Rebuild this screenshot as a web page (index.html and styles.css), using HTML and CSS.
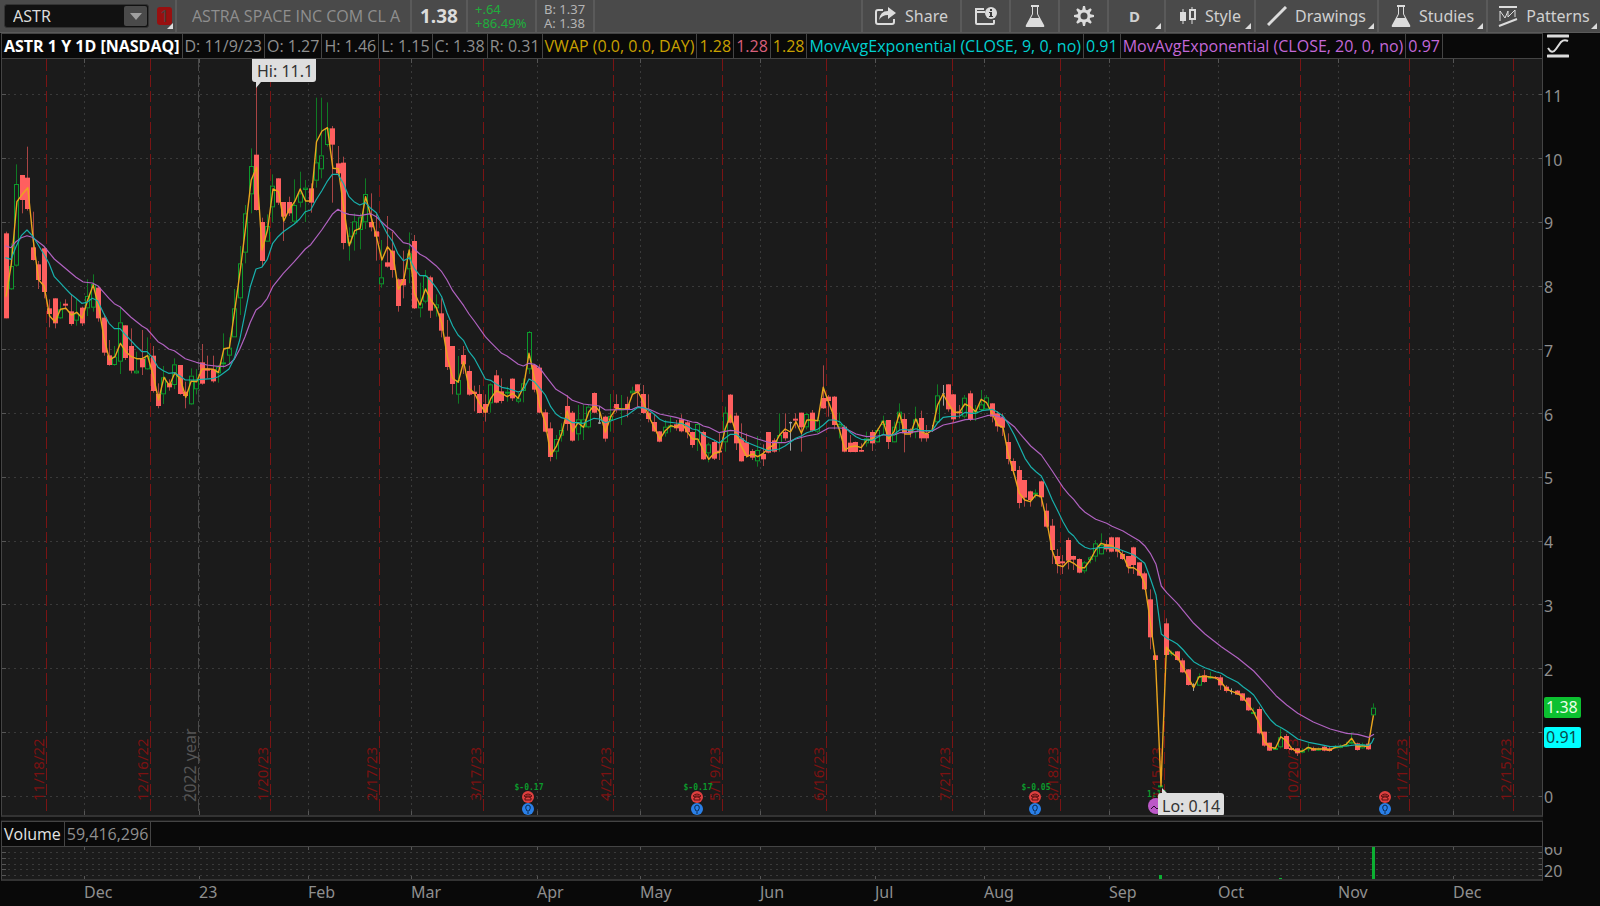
FILE: index.html
```html
<!DOCTYPE html>
<html lang="en">
<head>
    <meta charset="UTF-8">
    <meta name="viewport" content="width=device-width, initial-scale=1.0">
    <title>ASTR 1 Y 1D</title>
    <link rel="stylesheet" href="styles.css">
</head>
<body>
    <header class="toolbar">
        <div class="symbol-cell">
            <div class="symbol-box">
                <input class="symbol-input" type="text" value="ASTR" aria-label="Symbol">
                <button class="symbol-drop" aria-label="Symbol list">
                    <svg width="12" height="7" viewBox="0 0 12 7"><path d="M0 0H12L6 7Z" fill="#a0a0a0"/></svg>
                </button>
            </div>
            <button class="link-badge corner">1</button>
        </div>
        <div class="cell company">ASTRA SPACE INC COM CL A</div>
        <div class="cell last">1.38</div>
        <div class="cell stack change"><span>+.64</span><span>+86.49%</span></div>
        <div class="cell stack quote"><span>B: 1.37</span><span>A: 1.38</span></div>
        <div class="spacer"></div>
        <button class="cell tool share">
            <svg width="22" height="20" viewBox="0 0 22 20">
                <path d="M8 4H3Q1 4 1 6V16Q1 18 3 18H17Q19 18 19 16V13" fill="none" stroke="#dcdcdc" stroke-width="2"/>
                <path d="M13 1L21 7L13 13V9Q7 9 4 14Q5 5 13 5Z" fill="#dcdcdc"/>
            </svg>
            Share
        </button>
        <button class="cell tool icon-only" aria-label="Company info">
            <svg width="22" height="20" viewBox="0 0 22 20">
                <path d="M10 6H1V17Q1 18 2 18H18Q19 18 19 17V14M1 7V3H9" fill="none" stroke="#dcdcdc" stroke-width="2"/>
                <circle cx="16" cy="7" r="6" fill="#dcdcdc"/>
                <path d="M15 3H17V5H15ZM14 6H17V10H18V11H14V10H15V7H14Z" fill="#3a3a3a"/>
            </svg>
        </button>
        <button class="cell tool icon-only" aria-label="Lab">
            <svg width="20" height="24" viewBox="0 0 20 24">
                <path d="M6 1H14V3H13V10L19 21Q20 23 18 23H2Q0 23 1 21L7 10V3H6Z" fill="#dcdcdc"/>
                <path d="M8 3H12V10L14 14H6L8 10Z" fill="#4a4a4a"/>
            </svg>
        </button>
        <button class="cell tool icon-only" aria-label="Settings">
            <svg width="20" height="20" viewBox="-10 -10 20 20">
                <circle r="5" fill="none" stroke="#dcdcdc" stroke-width="3"/>
                <path d="M-2 -5L-1 -10H1L2 -5ZM-2 5L-1 10H1L2 5ZM-5 -2L-10 -1V1L-5 2ZM5 -2L10 -1V1L5 2Z" fill="#dcdcdc"/>
                <path d="M-2 -5L-1 -10H1L2 -5ZM-2 5L-1 10H1L2 5ZM-5 -2L-10 -1V1L-5 2ZM5 -2L10 -1V1L5 2Z" fill="#dcdcdc" transform="rotate(45)"/>
            </svg>
        </button>
        <button class="cell tool period corner">D</button>
        <button class="cell tool style corner">
            <svg width="18" height="20" viewBox="0 0 18 20">
                <path d="M4 3V18M13 1V4M13 14V18" stroke="#dcdcdc" stroke-width="1"/>
                <rect x="1" y="6" width="6" height="9" fill="#dcdcdc"/>
                <rect x="11" y="4" width="5" height="9" fill="none" stroke="#dcdcdc" stroke-width="2"/>
            </svg>
            Style
        </button>
        <button class="cell tool drawings corner">
            <svg width="20" height="20" viewBox="0 0 20 20"><path d="M1 19L19 1" stroke="#dcdcdc" stroke-width="3"/></svg>
            Drawings
        </button>
        <button class="cell tool studies corner">
            <svg width="20" height="24" viewBox="0 0 20 24">
                <path d="M6 1H14V3H13V10L19 21Q20 23 18 23H2Q0 23 1 21L7 10V3H6Z" fill="#dcdcdc"/>
                <path d="M8 3H12V10L14 14H6L8 10Z" fill="#4a4a4a"/>
            </svg>
            Studies
        </button>
        <button class="cell tool patterns corner">
            <svg width="20" height="22" viewBox="0 0 20 22">
                <path d="M1 2H19M1 21L19 14" stroke="#dcdcdc" stroke-width="2"/>
                <path d="M2 16V6L7 13L10 6V12L17 5V12" fill="none" stroke="#dcdcdc" stroke-width="1"/>
            </svg>
            Patterns
        </button>
    </header>

    <main class="chart">
        <div class="legend">
            <span class="title">ASTR 1 Y 1D [NASDAQ]</span>
            <span>D: 11/9/23</span>
            <span>O: 1.27</span>
            <span>H: 1.46</span>
            <span>L: 1.15</span>
            <span>C: 1.38</span>
            <span>R: 0.31</span>
            <span class="vwap">VWAP (0.0, 0.0, DAY)</span>
            <span class="vwap">1.28</span>
            <span class="upper">1.28</span>
            <span class="vwap">1.28</span>
            <span class="ema9">MovAvgExponential (CLOSE, 9, 0, no)</span>
            <span class="ema9">0.91</span>
            <span class="ema20">MovAvgExponential (CLOSE, 20, 0, no)</span>
            <span class="ema20">0.97</span>
        </div>
        <button class="axis-mode" aria-label="Axis settings">
            <svg width="22" height="24" viewBox="0 0 22 24">
                <path d="M1 2H21M1 22H21" stroke="#dcdcdc" stroke-width="3" stroke-linecap="round"/>
                <path d="M1 14Q5 21 9 15L14 8Q17 5 21 7" fill="none" stroke="#dcdcdc" stroke-width="2"/>
            </svg>
        </button>
        <div class="plot"><svg id="price"></svg></div>
        <div class="axis"><svg id="priceAxis"></svg></div>
        <div class="splitter"></div>
        <div class="axis"></div>
        <div class="legend">
            <span class="volume">Volume</span>
            <span>59,416,296</span>
        </div>
        <div class="axis"></div>
        <div class="plot"><svg id="volume"></svg></div>
        <div class="axis"><svg id="volumeAxis"></svg></div>
        <div class="months"><svg id="months"></svg></div>
    </main>
    <script src="script.js"></script>
</body>
</html>
```
FILE: styles.css
```css
* {
    box-sizing: border-box;
}
body {
    margin: 0;
    height: 100vh;
    display: flex;
    flex-direction: column;
    background: #090909;
    color: #8f8f8f;
    font-family: "Noto Sans", "Open Sans", sans-serif;
    font-size: 16px;
    line-height: 20px;
    overflow: hidden;
}
button, input {
    font: inherit;
    color: inherit;
    border: none;
    background: none;
    padding: 0;
    margin: 0;
}
svg {
    display: block;
    flex: none;
}

/* toolbar */
.toolbar {
    height: 33px;
    flex: none;
    display: flex;
    background: #4a4a4a;
    border-bottom: 1px solid #5a5a5a;
    overflow: hidden;
}
.symbol-cell {
    width: 175px;
    flex: none;
    display: flex;
    align-items: center;
    gap: 8px;
    padding-left: 4px;
}
.symbol-box {
    display: flex;
    width: 145px;
    height: 24px;
    padding: 1px;
    background: #111;
    border: 1px solid #333;
    border-radius: 3px;
}
.symbol-input {
    flex: 1;
    min-width: 0;
    padding-left: 7px;
    color: #dcdcdc;
}
.symbol-drop {
    width: 23px;
    display: flex;
    align-items: center;
    justify-content: center;
    background: #4a4a4a;
    border-radius: 2px;
}
.link-badge {
    width: 15px;
    height: 18px;
    line-height: 18px;
    border-radius: 3px;
    background: #981010;
    color: #4a4040;
}
.cell {
    flex: none;
    display: flex;
    align-items: center;
    border-left: 2px solid #5a5a5a;
}
.company {
    width: 235px;
    padding-left: 15px;
    font-family: "Open Sans", "Noto Sans", sans-serif;
    color: #8f8f8f;
}
.last {
    width: 56px;
    padding-left: 8px;
    font-size: 19px;
    font-weight: bold;
    color: #dcdcdc;
}
.stack {
    flex-direction: column;
    align-items: flex-start;
    justify-content: center;
    padding-left: 7px;
    font-size: 13px;
    line-height: 14px;
}
.change {
    width: 69px;
    color: #1fae3c;
}
.quote {
    width: 60px;
    color: #b4b4b4;
    border-right: 2px solid #5a5a5a;
}
.spacer {
    flex: 1;
}
.tool {
    justify-content: center;
    gap: 8px;
    color: #d0d0d0;
}
.share {
    width: 99px;
}
.icon-only {
    width: 49px;
}
.period {
    width: 57px;
    padding-right: 4px;
    font-size: 15px;
    font-weight: bold;
}
.style {
    width: 90px;
}
.drawings {
    width: 123px;
}
.studies {
    width: 109px;
}
.patterns {
    width: 114px;
}
.corner {
    position: relative;
}
.corner::after {
    content: "";
    position: absolute;
    right: 3px;
    bottom: 3px;
    border-left: 6px solid transparent;
    border-bottom: 6px solid #dcdcdc;
}
.link-badge::after {
    right: -1px;
    bottom: -4px;
}

/* chart area */
.chart {
    flex: 1;
    min-height: 0;
    display: grid;
    grid-template-columns: minmax(0, 1fr) 57px;
    grid-template-rows: 26px minmax(0, 1fr) 4px 26px 34px 25px;
    padding-left: 1px;
}
.legend {
    display: flex;
    overflow: hidden;
    white-space: nowrap;
    border: 1px solid #444;
    font-family: "Open Sans", "Noto Sans", sans-serif;
    line-height: 24px;
}
.legend span {
    padding: 0 2px;
    border-right: 1px solid #444;
}
.legend .vwap {
    color: #c8a000;
}
.legend .upper {
    color: #d8607c;
}
.legend .ema9 {
    color: #00d0d0;
}
.legend .ema20 {
    color: #c368d8;
}
.legend .title {
    color: #fff;
    font-weight: bold;
}
.legend .volume {
    padding-right: 3px;
    color: #e4e4e4;
}
.axis-mode {
    padding-left: 4px;
}
.plot {
    min-width: 0;
    background: #1b1b1b;
    border-left: 1px solid #444;
    border-right: 1px solid #444;
    border-bottom: 2px solid #333;
}
.splitter {
    background: #111;
    border-bottom: 1px solid #222;
}
.months {
    grid-column: 1 / 3;
}
.plot svg, .axis svg, .months svg {
    width: 100%;
    height: 100%;
}

/* drawing */
.grid {
    stroke: #3a3a3a;
    stroke-width: 1;
    stroke-dasharray: 2 4;
}
.tick {
    stroke: #555;
    stroke-width: 1;
}
.expiry {
    stroke: #7a1414;
    stroke-width: 1;
    stroke-dasharray: 12 4 12 4 11 4 12 4;
}
.expiry-label {
    fill: #7a1212;
    font-size: 15px;
}
.year {
    stroke: #4a4a4a;
    stroke-dasharray: 12 4 12 4 11 4 12 4;
}
.year-label {
    fill: #555;
}
.wick-r {
    stroke: #a84444;
}
.wick-g {
    stroke: #0f7a24;
}
.wick-w {
    stroke: #a0a0a0;
}
.body-r {
    fill: #ff5f5f;
}
.body-g {
    fill: none;
    stroke: #0c9a2c;
}
.body-w {
    fill: #a0a0a0;
}
.line {
    fill: none;
    stroke-width: 1;
    stroke-linejoin: round;
}
.line-vwap {
    stroke: #eaa51e;
    stroke-width: 1.4;
}
.line-ema9 {
    stroke: #18b0ac;
    stroke-width: 1.2;
}
.line-ema20 {
    stroke: #b062c0;
    stroke-width: 1.2;
}
.bubble {
    fill: #dedede;
}
.bubble-text {
    fill: #333;
}
.axis-text {
    fill: #8f8f8f;
}
.eps {
    fill: #0c9a2c;
    font-family: "DejaVu Sans Mono", monospace;
    font-size: 8px;
    font-weight: bold;
}
.vol-bar {
    fill: #0cb032;
}
```
FILE: script.js
```js
// One bar per line item: type high top bottom low vwap.
// Heights are in thirds of a unit below the `y` of the group.
const BARS = [
    { y: 90, bars: `r 425 430 685 685 620,g 460 528 598 600 520,g 223 282 527 530 335,r 255 255 330 370 313,
r 170 263 357 362 293,r 365 472 510 512 450,r 513 523 570 597 570,r 473 475 606 625 588,r 628 655 672 712 678,
r 625 625 700 715 695,g 635 658 685 687 658,r 628 641 647 658 655,r 613 664 702 707 675,g 628 670 692 707 667,
r 650 653 700 708 685,g 568 618 655 678 630,g 553 582 653 665 585,r 590 593 685 695 650,r 675 683 788 797 745,
r 750 796 825 827 810,g 768 800 825 827 800,g 653 697 815 852 760,r 706 706 804 810 785,r 715 768 842 850 800,
g 785 842 850 852 806,r 720 806 832 855 806,g 742 797 838 840 797,r 768 797 903 908 855,r 880 912 948 955 930,
g 828 862 913 942 862,r 868 880 892 902 887,g 805 823 885 897 848,r 825 825 912 914 868,r 875 905 918 955 922,
g 835 857 943 945 873,g 837 870 898 913 875,r 762 817 881 884 837,r 797 836 842 865 837,r 797 838 874 878 838,
g 825 830 850 878 847,g 730 817 823 835 776,g 742 773 797 823 773,g 597 655 742 742 660,g 468 520 625 675 540,
g 345 370 488 520 410,g 175 228 313 370 270,r -14 194 360 362 232,r 383 396 513 530 480,g 373 408 455 455 420,
g 253 287 352 396 297,r 265 265 338 345 305,r 336 336 380 453 393,r 320 336 370 378 358,g 268 345 395 402 335,
g 245 310 338 352 297,g 270 293 300 396 333,r 280 295 338 368 333,g 23 217 272 293 155,g 23 196 238 265 123,
g 37 115 165 170 113,r 108 115 164 338 235,r 168 220 250 257 236,r 200 218 459 478 355,g 412 437 460 512 467,
g 370 394 433 482 422,g 370 382 420 478 415,g 265 312 397 417 320,r 310 396 412 424 380,r 370 424 440 512 440,
g 450 562 583 593 510,r 378 517 530 533 470,r 425 482 540 563 490,r 565 568 648 665 598,r 482 567 586 625 570,
g 427 490 538 580 480,r 435 453 655 657 610,g 578 640 655 682 645,g 540 557 635 640 597,r 557 562 662 684 630,
g 613 643 655 680 653,r 625 670 722 742 700,r 690 740 831 840 800` },
    { y: 220, bars: `r 378 378 492 523 475,g 408 480 524 551 487,r 378 405 433 462 425,r 437 453 524 527 505,
r 497 515 522 574 520,r 495 522 579 580 553,r 523 552 578 605 577,g 490 493 550 578 535,r 450 466 548 550 512,
r 475 514 543 550 520,g 500 515 520 545 530,r 475 476 535 543 520,g 518 535 545 550 535,g 475 490 513 547 500,
g 333 336 448 462 400,r 432 435 509 517 475,r 433 443 578 580 560,r 568 577 635 637 610,r 607 625 711 724 705,
g 645 657 695 718 680,g 610 630 647 665 640,r 525 558 612 632 573,r 573 578 662 665 635,g 555 598 643 662 608,
g 553 598 622 660 622,g 555 560 622 625 575,r 517 519 578 580 556,w 558 607 611 612 575,r 587 590 656 665 637,
g 522 588 600 635 590,r 523 552 565 578 565,g 525 565 568 615 567,r 530 552 567 592 567,g 500 512 520 525 523,
r 493 493 515 560 515,r 495 522 579 582 545,r 523 578 597 607 590,r 583 606 634 636 622,r 633 634 665 667 658,
g 600 620 640 650 632,g 590 616 620 637 617,r 600 613 625 632 622,r 583 598 634 637 605,r 600 607 637 655 635,
r 635 636 675 683 657,g 610 612 660 693 657,r 632 636 718 720 690,g 668 673 700 727 718,r 663 666 716 720 700,
r 640 692 697 720 697,g 560 578 667 695 628,r 522 524 608 610 585,r 578 587 670 690 640,r 610 655 724 725 680,
r 640 667 708 713 710,r 687 693 713 720 702,g 648 690 724 740 710,r 673 702 718 738 700,r 636 636 698 700 683,
r 655 661 695 698 675,g 580 645 670 695 645,r 580 636 655 662 627,w 605 606 610 692 636,r 580 596 602 625 605,
r 578 578 622 695 640,g 578 582 622 628 600,r 570 578 632 635 600,g 592 600 635 640 602,r 436 534 565 567 502,
r 525 530 543 590 547,r 528 530 615 628 590,g 578 612 620 655 630,r 615 620 695 697 690` },
    { y: 350, bars: `r 255 278 306 307 290,r 275 276 306 307 288,r 280 300 305 306 293,g 245 265 280 290 270,
r 240 246 280 303 268,g 235 240 277 278 240,g 197 212 225 255 213,r 210 210 276 297 267,g 215 230 277 278 245,
g 160 185 218 240 190,r 190 207 250 307 252,r 235 238 250 262 252,g 170 208 247 265 207,r 182 204 265 275 245,
r 225 252 265 275 252,w 225 240 243 245 240,g 103 136 217 220 165,w 105 130 133 167 132,r 103 103 178 185 162,
r 132 133 208 218 187,r 165 185 190 205 187,g 135 143 200 205 162,r 122 130 209 213 170,g 165 183 190 213 185,
g 120 163 180 185 148,g 135 142 178 180 158,r 160 160 200 217 190,r 183 190 229 245 225,r 190 203 233 258 232,
r 250 276 327 343 315,r 325 333 363 373 370,r 348 360 459 475 430,r 390 390 443 470 450,r 422 424 450 470 455,
g 418 428 432 445 435,r 392 394 442 470 440,r 460 482 530 533 510,r 507 527 600 642 600,r 597 618 642 670 645,
r 615 634 640 672 650,r 563 570 632 658 632,r 617 618 629 660 640,r 625 627 668 670 653,g 633 637 664 670 653,
g 618 622 630 640 630,g 570 580 620 635 600,g 550 585 613 614 580,r 570 583 598 605 585,r 560 562 605 607 587,
r 562 562 605 622 600,r 600 612 627 630 615,r 618 618 650 670 653,r 590 592 645 672 653,r 637 637 677 678 665,
r 665 670 718 720 700` },
    { y: 530, bars: `r 178 208 322 358 270,r 375 376 390 392 390,g 765 766 772 775 768,r 265 280 375 377 352,
g 362 367 373 378 370,r 363 364 390 392 382,r 385 391 427 428 410,r 417 418 465 467 443,w 460 463 470 483 473,
g 430 440 467 468 440,r 420 436 456 458 439,g 425 440 444 447 441,r 438 441 445 448 443,r 435 442 466 480 455,
r 465 470 483 488 477,w 475 483 486 493 484,r 480 482 494 495 490,r 490 490 512 513 500,r 502 503 541 543 523,
g 533 546 550 553 545,r 530 537 610 613 580,r 605 605 647 650 635,r 638 638 662 663 652,g 650 654 657 660 655,
g 595 622 652 655 620,r 612 618 657 658 632,r 650 654 660 662 656,r 655 655 670 678 665,g 655 662 668 670 663,
g 640 652 655 665 652,r 650 655 662 663 657,g 652 656 660 662 657,r 648 650 662 664 657,r 650 655 663 665 660,
g 645 648 655 657 652,g 643 648 653 655 649,g 635 643 648 650 643,g 607 635 640 643 625,r 638 640 660 662 650,
g 638 643 655 657 647,r 638 641 658 660 650,g 520 533 556 558 556` }
];

// Moving averages, "x,y" pairs in thirds of a unit from the origin of the group
const EMA9 = [
    { x: 0, y: 90, points: `16,503 33,508 48,470 64,437 81,420 97,437 113,462 131,492 147,520 163,560 180,578 196,595
212,612 228,625 245,640 261,637 277,625 293,632 310,668 327,700 343,716 360,716 377,735 393,752 408,768 426,785
441,785 457,802 474,832 490,842 506,850 523,848 540,858 556,870 589,870 604,868 637,866 655,860 670,850 687,837
703,805 719,750 735,670 751,590 768,537 785,532 802,508 818,460 834,440 850,425 883,402 899,387 916,365 932,360
948,330 965,303 981,275 997,253 1014,253 1030,280 1047,320 1062,335 1079,345 1096,338 1112,355 1129,368 1145,400
1162,432 1178,455 1193,490 1210,512 1228,503 1243,535 1260,557 1277,557 1292,572 1308,592 1325,620 1341,668` },
    { x: 400, y: 220, points: `158,318 174,345 191,362 207,395 223,415 239,445 256,477 272,481 288,492 305,502
321,505 338,510 355,516 370,510 387,477 403,485 420,505 436,525 452,560 468,582 484,593 500,597 517,608 534,608
550,610 566,602 582,595 598,597 616,608 632,603 648,597 681,586 714,562 730,563 746,570 763,583 779,598 795,605
828,609 844,610 861,617 877,627 893,630 910,645 942,660 958,669 975,655 991,643 1009,643 1024,655 1040,667
1073,680 1106,692 1138,687 1155,678 1171,667 1187,655 1204,648 1220,638 1253,628 1270,615 1286,600 1303,600
1319,605` },
    { x: 800, y: 350, points: `135,232 152,248 168,260 184,268 217,271 233,262 250,253 266,258 283,253 299,240
315,238 332,242 348,236 365,242 397,242 413,218 430,202 447,200 479,198 496,187 512,190 528,190 545,182 577,178
593,187 609,198 625,222 643,255 659,290 675,325 692,350 708,365 724,378 740,410 757,450 773,482 789,515 806,545
821,558 838,580 855,592 871,597 904,592 936,593 953,596 985,608 1002,615 1018,627 1034,640` },
    { x: 1080, y: 530, points: `211,145 228,195 244,312 260,325 277,333 292,342 310,360 325,378 341,395 358,405
375,413 408,425 424,430 440,440 473,457 489,470 507,483 521,495 538,520 555,547 572,570 588,585 604,593 620,603
637,615 653,627 686,637 718,643 751,650 800,648 833,644 866,646 875,638 882,624` }
];
const EMA20 = [
    { x: 0, y: 90, points: `16,467 33,473 48,455 64,443 81,437 97,442 131,468 163,507 196,535 228,562 250,576
277,579 293,587 327,625 343,641 360,650 393,682 426,708 441,717 474,755 490,764 506,777 523,782 556,806 589,817
621,825 655,829 675,829 687,823 703,808 719,778 735,740 751,697 768,660 785,647 802,625 818,590 850,550 883,515
916,477 932,464 965,420 997,373 1014,358 1030,368 1047,373 1079,377 1112,371 1129,380 1162,412 1178,422 1193,440
1210,458 1228,462 1243,477 1260,493 1277,502 1308,527 1325,545 1341,570` },
    { x: 400, y: 220, points: `158,212 191,257 207,282 223,303 256,350 272,367 305,400 321,408 355,433 370,438
387,430 403,433 420,445 436,467 468,508 500,527 517,541 550,552 598,558 616,570 697,568 714,560 746,567 779,582
828,592 877,606 893,608 910,618 926,622 958,638 991,631 1009,633 1040,645 1073,657 1106,667 1155,668 1187,657
1220,648 1253,642 1286,624 1319,624` },
    { x: 800, y: 350, points: `135,235 168,252 200,260 233,258 250,255 283,255 299,248 332,247 365,242 397,243
430,225 463,218 496,209 528,207 561,197 577,195 609,203 643,230 659,250 692,288 724,315 757,363 789,412 806,433
821,448 838,470 855,487 887,508 920,520 936,529 969,543 985,553 1018,572 1034,587` },
    { x: 1080, y: 530, points: `211,70 228,103 244,168 260,188 292,220 341,280 375,312 424,350 473,384 521,423
555,460 588,497 620,525 653,550 700,576 751,597 800,610 833,613 866,622 882,613` }
];

const MONTHS = [[84, 'Dec'], [199, '23'], [308, 'Feb'], [411, 'Mar'], [537, 'Apr'], [640, 'May'], [760, 'Jun'],
    [875, 'Jul'], [984, 'Aug'], [1109, 'Sep'], [1218, 'Oct'], [1338, 'Nov'], [1453, 'Dec']];
const EXPIRIES = [[46, '11/18/22'], [150, '12/16/22'], [270, '1/20/23'], [379, '2/17/23'], [483, '3/17/23'],
    [613, '4/21/23'], [722, '5/19/23'], [826, '6/16/23'], [952, '7/21/23'], [1060, '8/18/23'], [1164, '9/15/23'],
    [1300, '10/20/23'], [1409, '11/17/23'], [1513, '12/15/23']];
const EARNINGS = [[528, '$-0.17'], [697, '$-0.17'], [1035, '$-0.05'], [1385, '']];

const LEFT = 2, TOP = 59, PLOT_W = 1540, PLOT_H = 756;
const ZERO = 796, UNIT = 63.75;
const BAR_STEP = 5.448;

function size(id) {
    const box = document.getElementById(id).getBoundingClientRect();
    return { w: box.width, h: box.height };
}

function line(x1, y1, x2, y2, cls) {
    return `<line x1="${x1}" y1="${y1}" x2="${x2}" y2="${y2}" class="${cls}"/>`;
}

// centre a hairline on the pixel
function crisp(v) {
    return Math.floor(v) + 0.5;
}

function drawPrice() {
    const { w, h } = size('price');
    const X = v => (v - LEFT) * w / PLOT_W;
    const Y = v => (v - TOP) * h / PLOT_H;
    let out = '';

    for (let p = 0; p <= 11; p++) {
        const y = crisp(Y(ZERO - p * UNIT));
        out += line(0, y, w, y, 'grid') + line(0, y, 4, y, 'tick') + line(w - 3, y, w, y, 'tick');
    }
    MONTHS.forEach(([m]) => {
        const x = crisp(X(m));
        out += line(x, 0, x, h, 'grid') + line(x, 0, x, 4, 'tick') + line(x, h - 4, x, h, 'tick');
    });
    const yearX = crisp(X(198));
    out += line(yearX, 0, yearX, h, 'year');
    out += `<text class="year-label" transform="translate(${X(196)} ${Y(802)}) rotate(-90)">2022 year</text>`;
    EXPIRIES.forEach(([e, label]) => {
        const x = crisp(X(e));
        out += line(x, 0, x, h, 'expiry');
        out += `<text class="expiry-label" transform="translate(${X(e - 2)} ${Y(801)}) rotate(-90)">${label}</text>`;
    });

    const vwap = [];
    let i = 0;
    BARS.forEach(group => group.bars.split(',').forEach(item => {
        const [type, ...nums] = item.trim().split(' ');
        const [high, top, bottom, low, v] = nums.map(n => Y(group.y + n / 3));
        const x = X(6 + i * BAR_STEP);
        const cx = crisp(x);
        if (type === 'g') {
            out += line(cx, high, cx, top, 'wick-g') + line(cx, bottom, cx, low, 'wick-g');
            out += `<rect x="${cx - 2}" y="${top + 0.5}" width="4" height="${Math.max(bottom - top - 1, 1)}" class="body-g"/>`;
        } else {
            const half = type === 'w' ? 1.5 : 2.5;
            out += line(cx, high, cx, low, 'wick-' + type);
            out += `<rect x="${cx - half}" y="${top}" width="${half * 2}" height="${Math.max(bottom - top, 1)}" class="body-${type}"/>`;
        }
        vwap.push(x.toFixed(1) + ',' + v.toFixed(1));
        i++;
    }));

    const points = groups => groups.map(g => g.points.split(/\s+/).map(p => {
        const [px, py] = p.split(',');
        return X(g.x + px / 3).toFixed(1) + ',' + Y(g.y + py / 3).toFixed(1);
    }).join(' ')).join(' ');
    out += `<polyline class="line line-vwap" points="${vwap.join(' ')}"/>`;
    out += `<polyline class="line line-ema20" points="${points(EMA20)}"/>`;
    out += `<polyline class="line line-ema9" points="${points(EMA9)}"/>`;

    EARNINGS.forEach(([e, eps]) => {
        out += `<text class="eps" text-anchor="middle" x="${X(e + 1)}" y="${Y(790)}">${eps}</text>`;
        out += `<g transform="translate(${X(e)} ${Y(797)})">
            <circle r="6" fill="#e04040"/>
            <path d="M-4 -1Q0 -5 4 -1L2 0V-1H-2V0ZM-3 3V1L-1 0H1L3 1V3Z" fill="none" stroke="#5a1010"/>
            <circle cy="12" r="6" fill="#2a80e8"/>
            <path d="M-1 14Q-3 11 -2 9Q0 7 2 9Q3 11 1 14ZM-1 16H1" fill="none" stroke="#0c2a50"/></g>`;
    });

    // split marker
    out += `<text class="eps" x="${X(1147)}" y="${Y(797)}">1:15</text>`;
    out += `<g transform="translate(${X(1156)} ${Y(806)})"><circle r="8" fill="#bc58c8"/>
        <path d="M-5 3L-2 0L1 3L4 0" fill="none" stroke="#2a102c"/></g>`;

    // high and low bubbles
    out += `<g transform="translate(${X(252)} 0)">
        <path class="bubble" d="M0 0H64V20Q64 23 61 23H9L4 29V23H3Q0 23 0 20Z"/>
        <text class="bubble-text" x="5" y="18">Hi: 11.1</text></g>`;
    out += `<g transform="translate(${X(1158)} ${Y(793)})">
        <path class="bubble" d="M3 0H4L4 -5L9 0H63Q66 0 66 3V20Q66 23 63 23H0V3Q0 0 3 0Z"/>
        <text class="bubble-text" x="4" y="19">Lo: 0.14</text></g>`;
    document.getElementById('price').innerHTML = out;

    let axis = '';
    for (let p = 0; p <= 11; p++) {
        if (p !== 1) {
            axis += `<text class="axis-text" x="1" y="${Y(ZERO - p * UNIT) + 7}">${p}</text>`;
        }
    }
    axis += `<rect x="1" y="${Y(697)}" width="37" height="21" rx="2" fill="#0cc030"/>
        <text x="3" y="${Y(697) + 16}" fill="#e8ffe8">1.38</text>
        <rect x="1" y="${Y(727)}" width="37" height="21" rx="2" fill="#00ffff"/>
        <text x="3" y="${Y(727) + 16}" fill="#0a4a4a">0.91</text>`;
    document.getElementById('priceAxis').innerHTML = axis;
}

function drawVolume() {
    const { w, h } = size('volume');
    const X = v => (v - LEFT) * w / PLOT_W;
    let out = '';
    [5, 11, 17, 22, 28].forEach(v => {
        out += line(0, v + 0.5, w, v + 0.5, 'grid') + line(0, v + 0.5, 4, v + 0.5, 'tick') + line(w - 3, v + 0.5, w, v + 0.5, 'tick');
    });
    MONTHS.forEach(([m]) => {
        const x = crisp(X(m));
        out += line(x, 0, x, 3, 'tick') + line(x, h - 3, x, h, 'tick');
    });
    [[1373, h], [1160, 4], [1280, 1]].forEach(([x, bar]) => {
        out += `<rect class="vol-bar" x="${X(x - 1)}" y="${h - bar}" width="3" height="${bar}"/>`;
    });
    document.getElementById('volume').innerHTML = out;
    document.getElementById('volumeAxis').innerHTML =
        '<text class="axis-text" x="1" y="8">60</text><text class="axis-text" x="1" y="30">20</text>';
    document.getElementById('months').innerHTML = MONTHS.map(([m, label]) =>
        `<text class="axis-text" x="${X(m) + 1}" y="17">${label}</text>`).join('');
}

function draw() {
    drawPrice();
    drawVolume();
}
window.addEventListener('resize', draw);
draw();
```
